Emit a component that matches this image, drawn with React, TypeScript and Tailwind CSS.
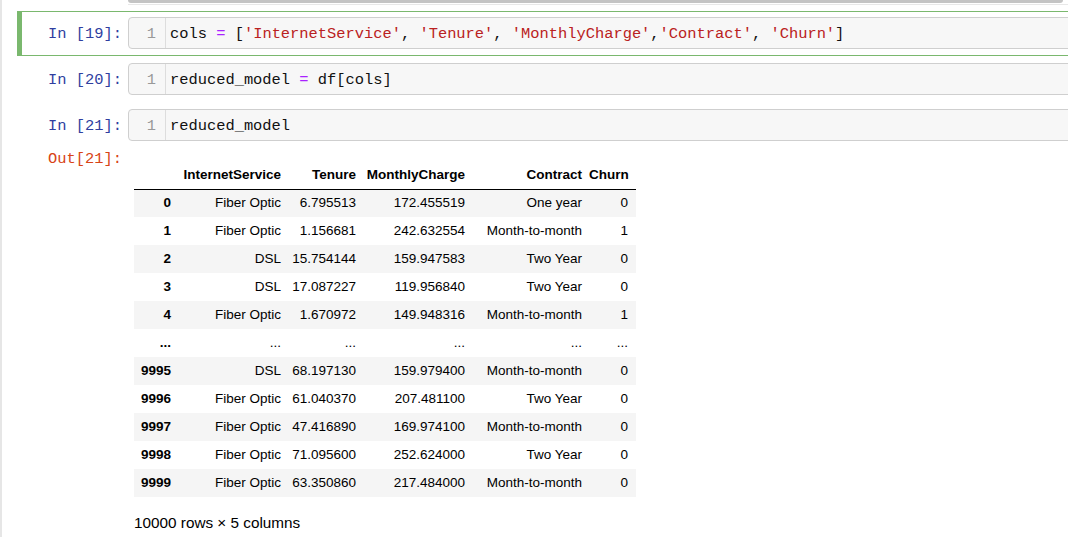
import React from "react";

const MONO = "font-['Liberation_Mono',monospace]";

const HEAD = ["", "InternetService", "Tenure", "MonthlyCharge", "Contract", "Churn"];

const ROWS: string[][] = [
  ["0", "Fiber Optic", "6.795513", "172.455519", "One year", "0"],
  ["1", "Fiber Optic", "1.156681", "242.632554", "Month-to-month", "1"],
  ["2", "DSL", "15.754144", "159.947583", "Two Year", "0"],
  ["3", "DSL", "17.087227", "119.956840", "Two Year", "0"],
  ["4", "Fiber Optic", "1.670972", "149.948316", "Month-to-month", "1"],
  ["...", "...", "...", "...", "...", "..."],
  ["9995", "DSL", "68.197130", "159.979400", "Month-to-month", "0"],
  ["9996", "Fiber Optic", "61.040370", "207.481100", "Two Year", "0"],
  ["9997", "Fiber Optic", "47.416890", "169.974100", "Month-to-month", "0"],
  ["9998", "Fiber Optic", "71.095600", "252.624000", "Two Year", "0"],
  ["9999", "Fiber Optic", "63.350860", "217.484000", "Month-to-month", "0"],
];

// striped rows: the "..." row stays white
const STRIPED = [0, 2, 4, 6, 8, 10];

interface CellProps {
  n: number;
  selected?: boolean;
  children: React.ReactNode;
}

function CodeCell({ n, selected, children }: CellProps) {
  return (
    <div
      className={`flex items-start border border-l-[5px] pt-[5px] pb-[6px] ${
        selected ? "border-[#7ab86e]" : "border-transparent"
      }`}
    >
      <div
        className={`w-[106px] h-[32px] shrink-0 flex items-center justify-end pt-[3px] pr-[6px] text-[15.4px] text-[#303f9f] ${MONO}`}
      >
        In [{n}]:
      </div>
      <div className="flex-1 h-[32px] flex border border-[#cfcfcf] rounded-sm bg-[#f7f7f7]">
        <div
          className={`w-[37px] shrink-0 border-r border-[#dddddd] flex items-center justify-end pt-[3px] pr-[9px] text-[15.4px] text-[#999999] ${MONO}`}
        >
          1
        </div>
        <div
          className={`flex items-center pt-[3px] pl-[4px] text-[15.4px] text-[#111111] whitespace-pre ${MONO}`}
        >
          {children}
        </div>
      </div>
    </div>
  );
}

const Op = ({ c }: { c: string }) => <span className="text-[#aa22ff]">{c}</span>;
const Str = ({ c }: { c: string }) => <span className="text-[#ba2121]">{c}</span>;

export default function App() {
  return (
    <div className="w-[1068px] h-[537px] overflow-hidden bg-white border-l-2 border-[#e6e6e6] font-['Liberation_Sans',Arial,sans-serif]">
      {/* tail of previous output */}
      <div className="ml-[126px] mr-[5px] h-[3px] bg-[#c4c4c4] rounded-b-sm" />
      <div className="ml-[126px] mt-px h-px bg-[#e8e8e8]" />

      <div className="ml-[15px] w-[1075px] mt-[6px] flex flex-col gap-px">
        <CodeCell n={19} selected>
          cols <Op c="=" /> [<Str c="'InternetService'" />, <Str c="'Tenure'" />,{" "}
          <Str c="'MonthlyCharge'" />,<Str c="'Contract'" />, <Str c="'Churn'" />]
        </CodeCell>
        <CodeCell n={20}>
          reduced_model <Op c="=" /> df[cols]
        </CodeCell>
        <CodeCell n={21}>reduced_model</CodeCell>

        {/* output */}
        <div className="flex items-start border-l-[5px] border-transparent">
          <div
            className={`w-[106px] shrink-0 text-right pr-[6px] pt-px leading-[18px] text-[15.4px] text-[#d84315] ${MONO}`}
          >
            Out[21]:
          </div>
          <div className="ml-[6px] mt-[12px]">
            <table className="table-fixed border-collapse text-[13.5px] text-black w-[502px]">
              <colgroup>
                <col className="w-[44px]" />
                <col className="w-[110px]" />
                <col className="w-[75px]" />
                <col className="w-[109px]" />
                <col className="w-[117px]" />
                <col className="w-[47px]" />
              </colgroup>
              <thead>
                <tr className="h-[28px] border-b border-black">
                  {HEAD.map((h, i) => (
                    <th
                      key={i}
                      className={`p-0 text-right font-bold whitespace-nowrap ${
                        i === 5 ? "pr-[8px]" : "pr-[7px]"
                      }`}
                    >
                      {h}
                    </th>
                  ))}
                </tr>
              </thead>
              <tbody>
                {ROWS.map((r, ri) => (
                  <tr key={ri} className={`h-[28px] ${STRIPED.includes(ri) ? "bg-[#f5f5f5]" : "bg-white"}`}>
                    {r.map((v, ci) =>
                      ci === 0 ? (
                        <th key={ci} className="p-0 pr-[7px] text-right font-bold whitespace-nowrap">
                          {v}
                        </th>
                      ) : (
                        <td
                          key={ci}
                          className={`p-0 text-right whitespace-nowrap ${
                            ci === 5 ? "pr-[8px]" : "pr-[7px]"
                          }`}
                        >
                          {v}
                        </td>
                      ),
                    )}
                  </tr>
                ))}
              </tbody>
            </table>
            <p className="mt-4 text-[15.3px] leading-[20px] text-black">10000 rows × 5 columns</p>
          </div>
        </div>
      </div>
    </div>
  );
}
